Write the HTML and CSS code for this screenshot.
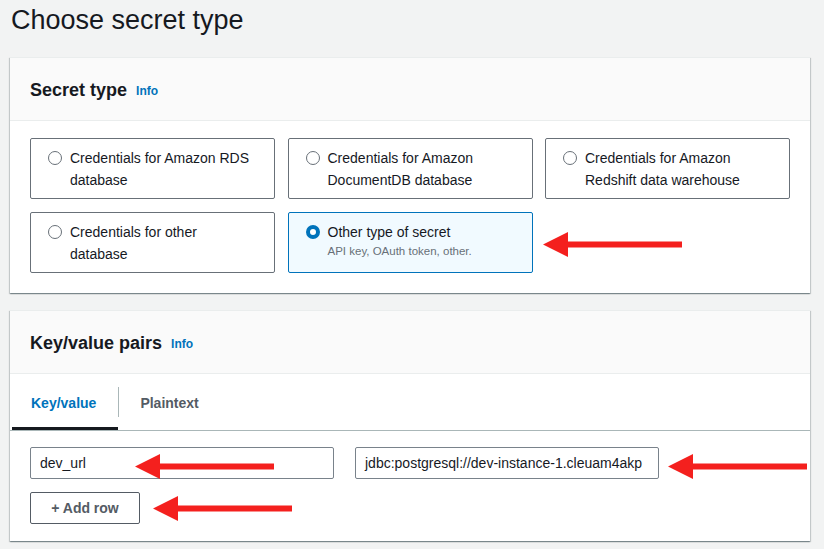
FILE: index.html
```html
<!DOCTYPE html>
<html lang="en">
<head>
<meta charset="utf-8">
<title>Choose secret type</title>
<link rel="stylesheet" href="styles.css">
</head>
<body>
<div class="page">
  <h1 class="page-title">Choose secret type</h1>

  <section class="panel">
    <header class="panel-header">
      <h2 class="panel-title">Secret type</h2>
      <a class="info-link">Info</a>
    </header>
    <div class="panel-body">
      <div class="tiles">
        <label class="tile">
          <span class="radio"></span>
          <span class="tile-text">Credentials for Amazon RDS database</span>
        </label>
        <label class="tile">
          <span class="radio"></span>
          <span class="tile-text">Credentials for Amazon DocumentDB database</span>
        </label>
        <label class="tile">
          <span class="radio"></span>
          <span class="tile-text">Credentials for Amazon Redshift data warehouse</span>
        </label>
        <label class="tile">
          <span class="radio"></span>
          <span class="tile-text">Credentials for other database</span>
        </label>
        <label class="tile tile-selected">
          <span class="radio radio-checked"></span>
          <span class="tile-text">Other type of secret<span class="tile-desc">API key, OAuth token, other.</span></span>
        </label>
      </div>
    </div>
  </section>

  <section class="panel panel-kv">
    <header class="panel-header">
      <h2 class="panel-title">Key/value pairs</h2>
      <a class="info-link">Info</a>
    </header>
    <nav class="tabs">
      <span class="tab tab-active">Key/value</span>
      <span class="tab-sep"></span>
      <span class="tab">Plaintext</span>
    </nav>
    <div class="kv-body">
      <div class="kv-row">
        <div class="input">dev_url</div>
        <div class="input">jdbc:postgresql://dev-instance-1.cleuam4akp</div>
      </div>
      <button class="btn">+ Add row</button>
    </div>
  </section>

  <svg class="arrow arrow-type" viewBox="0 0 139 25"><polygon points="0,12.5 25,0 25,9.5 139,9.5 139,15.5 25,15.5 25,25"/></svg>
  <svg class="arrow arrow-key" viewBox="0 0 139 25"><polygon points="0,12.5 25,0 25,9.5 139,9.5 139,15.5 25,15.5 25,25"/></svg>
  <svg class="arrow arrow-value" viewBox="0 0 139 25"><polygon points="0,12.5 25,0 25,9.5 139,9.5 139,15.5 25,15.5 25,25"/></svg>
  <svg class="arrow arrow-add" viewBox="0 0 139 25"><polygon points="0,12.5 25,0 25,9.5 139,9.5 139,15.5 25,15.5 25,25"/></svg>
</div>
</body>
</html>
```

FILE: styles.css
```css
* { box-sizing: border-box; }

html, body {
  margin: 0;
  padding: 0;
  background: #f2f3f3;
}

body {
  font-family: "Liberation Sans", Arial, sans-serif;
  color: #16191f;
  font-size: 14px;
}

.page {
  position: relative;
  width: 824px;
  height: 549px;
  overflow: hidden;
  padding: 0 14px 0 10px;
}

.page-title {
  margin: 0;
  padding: 3px 0 0 1px;
  height: 57px;
  font-size: 27px;
  font-weight: 400;
  line-height: 34px;
  color: #16191f;
}

.panel {
  background: #fff;
  border-top: 1px solid #eaeded;
  box-shadow: 0 1px 1px 0 rgba(0, 28, 36, 0.3), 1px 1px 1px 0 rgba(0, 28, 36, 0.15), -1px 1px 1px 0 rgba(0, 28, 36, 0.15);
}

.panel-kv {
  margin-top: 17px;
}

.panel-header {
  display: flex;
  align-items: center;
  height: 63px;
  padding: 1px 20px 0;
  background: #fafafa;
  border-bottom: 1px solid #eaeded;
}

.panel-title {
  margin: 0;
  font-size: 18px;
  font-weight: 700;
  line-height: 22px;
}

.info-link {
  margin-left: 9px;
  margin-top: 2px;
  font-size: 12px;
  font-weight: 700;
  color: #0073bb;
}

.panel-body {
  padding: 17px 20px 20px;
}

.tiles {
  display: grid;
  grid-template-columns: 245px 245px 245px;
  grid-auto-rows: 61px;
  column-gap: 12.5px;
  row-gap: 13px;
}

.tile {
  display: flex;
  align-items: flex-start;
  gap: 8px;
  padding: 8px 16px 8px 17px;
  border: 1px solid #687078;
  border-radius: 2px;
  background: #fff;
}

.tile-selected {
  background: #f1faff;
  border-color: #0073bb;
}

.radio {
  flex: none;
  width: 14px;
  height: 14px;
  margin-top: 4px;
  border: 1px solid #687078;
  border-radius: 50%;
  background: #fff;
}

.radio-checked {
  border: 4.5px solid #0073bb;
}

.tile-text {
  font-size: 14px;
  line-height: 22px;
  color: #16191f;
}

.tile-desc {
  display: block;
  font-size: 11.5px;
  line-height: 16px;
  color: #687078;
}

.tabs {
  display: flex;
  align-items: center;
  height: 57px;
  padding-left: 2px;
  border-bottom: 1px solid #aab7b8;
}

.tab {
  display: flex;
  align-items: center;
  height: 100%;
  padding: 2px 20px 0 19px;
  font-size: 14px;
  font-weight: 700;
  color: #545b64;
}

.tab-active {
  color: #0073bb;
  box-shadow: inset 0 -3px 0 #16191f;
  padding-right: 22px;
}

.tab-sep {
  width: 1px;
  height: 30px;
  background: #aab7b8;
  margin-right: 2px;
}

.kv-body {
  padding: 16px 20px 17px;
  display: flex;
  flex-direction: column;
  align-items: flex-start;
  gap: 13px;
}

.kv-row {
  display: flex;
  gap: 21px;
}

.input {
  width: 304px;
  height: 32px;
  padding: 0 9px;
  display: flex;
  align-items: center;
  border: 1px solid #79828b;
  border-radius: 2px;
  font-size: 14px;
  color: #16191f;
  white-space: nowrap;
  overflow: hidden;
  background: #fff;
}

.btn {
  width: 110px;
  height: 32px;
  padding: 0;
  border: 1px solid #545b64;
  border-radius: 2px;
  background: #fff;
  font-family: inherit;
  font-size: 14px;
  font-weight: 700;
  color: #545b64;
}

.arrow {
  position: absolute;
  width: 139px;
  height: 25px;
  fill: #f4201e;
}

.arrow-type { left: 543px; top: 232px; }
.arrow-key { left: 135px; top: 454px; }
.arrow-value { left: 668px; top: 454px; }
.arrow-add { left: 153px; top: 496px; }
```
